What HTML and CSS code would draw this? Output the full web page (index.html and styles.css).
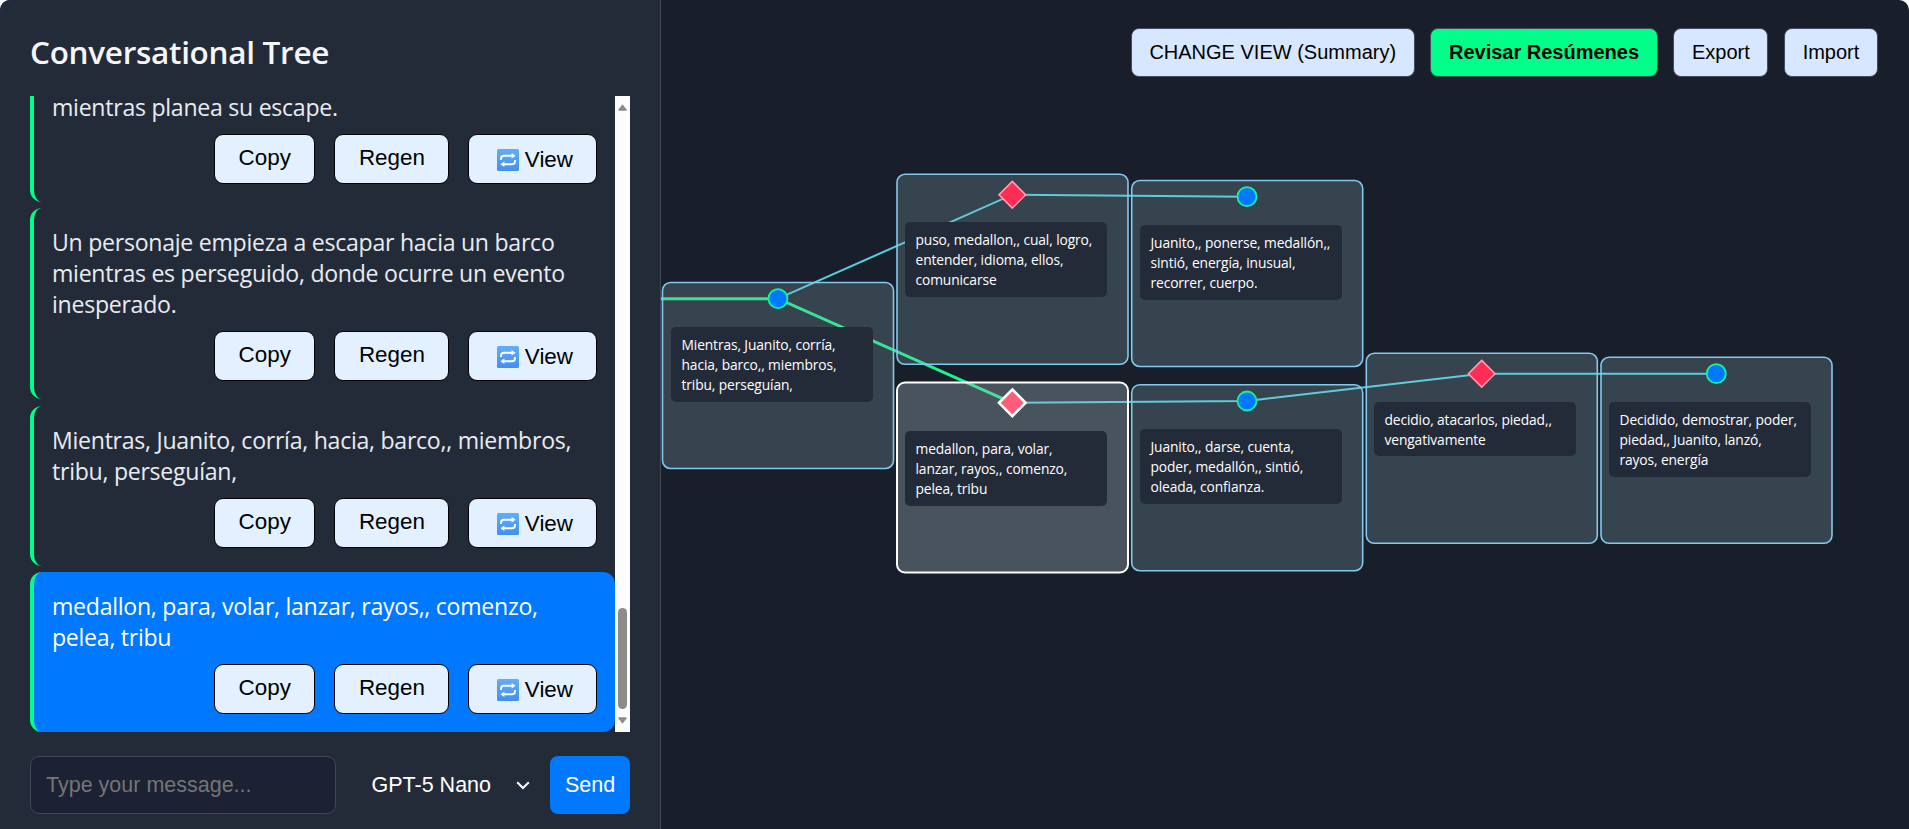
FILE: index.html
```html
<!DOCTYPE html>
<html lang="es">
<head>
<meta charset="utf-8">
<title>Conversational Tree</title>
<link rel="stylesheet" href="styles.css">
</head>
<body>
<svg class="defs" width="0" height="0" aria-hidden="true">
  <defs>
    <linearGradient id="tile" x1="0" y1="0" x2="0" y2="1"><stop offset="0" stop-color="#63adf7"/><stop offset="1" stop-color="#4090f2"/></linearGradient>
    <symbol id="repeat" viewBox="0 0 22 22">
      <rect width="22" height="22" rx="1.5" fill="url(#tile)"/>
      <path d="M4 11V9.7Q4 6.7 7 6.7H15M18 11V12.3Q18 15.3 15 15.3H7" fill="none" stroke="#fff" stroke-width="1.9"/>
      <path d="M14.6 4L18.6 6.7L14.6 9.4ZM7.4 12.6L3.4 15.3L7.4 18Z" fill="#fff"/>
    </symbol>
  </defs>
</svg>
<div class="app">
  <aside class="sidebar">
    <h1 class="title">Conversational Tree</h1>
    <div class="history">
      <div class="messages">
        <article class="message">
          <p class="text">mientras planea su escape.</p>
          <div class="actions"><button class="action">Copy</button><button class="action">Regen</button><button class="action view"><svg class="icon"><use href="#repeat"/></svg>View</button></div>
        </article>
        <article class="message">
          <p class="text">Un personaje empieza a escapar hacia un barco<br>mientras es perseguido, donde ocurre un evento<br>inesperado.</p>
          <div class="actions"><button class="action">Copy</button><button class="action">Regen</button><button class="action view"><svg class="icon"><use href="#repeat"/></svg>View</button></div>
        </article>
        <article class="message">
          <p class="text">Mientras, Juanito, corría, hacia, barco,, miembros,<br>tribu, perseguían,</p>
          <div class="actions"><button class="action">Copy</button><button class="action">Regen</button><button class="action view"><svg class="icon"><use href="#repeat"/></svg>View</button></div>
        </article>
        <article class="message active">
          <p class="text">medallon, para, volar, lanzar, rayos,, comenzo,<br>pelea, tribu</p>
          <div class="actions"><button class="action">Copy</button><button class="action">Regen</button><button class="action view"><svg class="icon"><use href="#repeat"/></svg>View</button></div>
        </article>
      </div>
      <div class="scrollbar">
        <svg class="arrow" viewBox="0 0 9 7"><path d="M4.5 .3L8.6 5.6Q8.8 6.8 8 6.8H1Q.2 6.8 .4 5.6Z"/></svg>
        <div class="thumb"></div>
        <svg class="arrow" viewBox="0 0 9 7"><path d="M4.5 6.8L8.6 1.5Q8.8 .3 8 .3H1Q.2 .3 .4 1.5Z"/></svg>
      </div>
    </div>
    <form class="composer">
      <input class="prompt" type="text" placeholder="Type your message...">
      <div class="model"><span>GPT-5 Nano</span><svg class="chevron" viewBox="0 0 14 9"><path d="M1.2 1.2L7 7L12.8 1.2"/></svg></div>
      <button class="send" type="button">Send</button>
    </form>
  </aside>
  <main class="canvas">
    <nav class="toolbar">
      <button class="tool">CHANGE VIEW (Summary)</button>
      <button class="tool primary">Revisar Resúmenes</button>
      <button class="tool">Export</button>
      <button class="tool">Import</button>
    </nav>
    <svg class="tree" viewBox="661 0 1248 829">
      <g class="links">
        <path class="link path" d="M640 298.7H778L1012.3 402.8"/>
        <path class="link" d="M778 298.7L1012.3 194.7L1247 196.7"/>
        <path class="link" d="M1012.3 402.8L1247 401L1481.7 373.7H1716.3"/>
      </g>
      <g class="cards">
        <rect x="662.5" y="282.5" width="231" height="186" rx="8"/>
        <rect x="897" y="174.3" width="231" height="190" rx="8"/>
        <rect class="selected" x="897" y="382.5" width="231" height="190" rx="8"/>
        <rect x="1131.7" y="180.5" width="231" height="186" rx="8"/>
        <rect x="1131.7" y="384.7" width="231" height="186" rx="8"/>
        <rect x="1366.3" y="353.3" width="231" height="190" rx="8"/>
        <rect x="1601" y="357.3" width="231" height="186" rx="8"/>
      </g>
      <g class="marks">
        <circle cx="778" cy="298.7" r="9.5"/>
        <circle cx="1247" cy="196.7" r="9.5"/>
        <circle cx="1247" cy="401" r="9.5"/>
        <circle cx="1716.3" cy="373.7" r="9.5"/>
        <path d="M1012.3 181.4L1025.6 194.7L1012.3 208L999 194.7Z"/>
        <path d="M1481.7 360.4L1495 373.7L1481.7 387L1468.4 373.7Z"/>
        <path class="selected" d="M1012.3 389.5L1025.6 402.8L1012.3 416.1L999 402.8Z"/>
      </g>
    </svg>
    <div class="note" style="left:10px;top:327px">Mientras, Juanito, corría,<br>hacia, barco,, miembros,<br>tribu, perseguían,</div>
    <div class="note" style="left:244px;top:222px">puso, medallon,, cual, logro,<br>entender, idioma, ellos,<br>comunicarse</div>
    <div class="note" style="left:244px;top:431px">medallon, para, volar,<br>lanzar, rayos,, comenzo,<br>pelea, tribu</div>
    <div class="note" style="left:479px;top:225px">Juanito,, ponerse, medallón,,<br>sintió, energía, inusual,<br>recorrer, cuerpo.</div>
    <div class="note" style="left:479px;top:429px">Juanito,, darse, cuenta,<br>poder, medallón,, sintió,<br>oleada, confianza.</div>
    <div class="note" style="left:713px;top:402px">decidio, atacarlos, piedad,,<br>vengativamente</div>
    <div class="note" style="left:948px;top:402px">Decidido, demostrar, poder,<br>piedad,, Juanito, lanzó,<br>rayos, energía</div>
  </main>
</div>
</body>
</html>
```

FILE: styles.css
```css
* { box-sizing: border-box; }
body { margin: 0; background: #fff; font-family: "Open Sans", "Noto Sans", sans-serif; }
.defs { position: absolute; }
button, input { font-family: "Liberation Sans", Arial, sans-serif; }
.app { display: flex; width: 1909px; height: 829px; overflow: hidden; border-radius: 10px 10px 0 0; background: #191f2a; }

.sidebar { display: flex; flex-direction: column; flex: none; width: 661px; padding: 0 30px 15px; border-right: 1px solid #414755; background: #242b38; }
.title { margin: 0; height: 96px; padding-top: 30px; font-size: 31.5px; line-height: 44px; font-weight: 600; letter-spacing: -0.3px; color: #f4f6fb; white-space: nowrap; }
.history { display: flex; width: 600px; height: 636px; overflow: hidden; }
.messages { display: flex; flex-direction: column; justify-content: flex-end; gap: 6.5px; width: 585px; }
.message { flex: none; padding: 18px; border-left: 4px solid #00ff88; border-radius: 12px; color: #e8ebf2; }
.message.active { background: #0078ff; color: #fff; }
.text { margin: 0 0 11px; padding-top: 1px; font-size: 23.1px; line-height: 31px; letter-spacing: -0.27px; white-space: nowrap; }
.actions { display: flex; justify-content: flex-end; gap: 19px; }
.action { display: flex; align-items: center; height: 50px; padding: 0 23.5px 2px; border: 1px solid #000; border-radius: 9px; background: #e2f0ff; font-size: 22.4px; color: #000; }
.view { padding: 2px 23px 0 28px; }
.icon { width: 22px; height: 22px; margin-right: 5.5px; }
.scrollbar { display: flex; flex-direction: column; align-items: center; width: 15px; padding: 8px 0; background: #fcfcfc; }
.arrow { flex: none; width: 9px; height: 7px; fill: #8b8b8b; }
.thumb { width: 9px; height: 101px; margin-top: auto; margin-bottom: 8px; border-radius: 5px; background: #8b8b8b; }

.composer { display: flex; margin-top: 24px; height: 58px; }
.prompt { width: 306px; padding: 0 15px; border: 1px solid #414759; border-radius: 9px; background: #1c2133; font-size: 21.5px; }
.prompt::placeholder { color: #757575; }
.model { display: flex; align-items: center; justify-content: space-between; width: 158px; margin-left: 35.5px; font: 21.5px "Liberation Sans", Arial, sans-serif; color: #fff; }
.chevron { width: 14px; height: 9px; fill: none; stroke: #fff; stroke-width: 2; }
.send { width: 80px; margin-left: auto; padding: 0; border: 0; border-radius: 8px; background: #0078ff; font-size: 21.5px; color: #fff; }

.canvas { position: relative; flex: 1; overflow: hidden; }
.toolbar { display: flex; justify-content: flex-end; gap: 15.5px; padding: 28px 31px 0 0; }
.tool { height: 49px; padding: 0 17.7px; border: 1px solid #414d5f; border-radius: 8px; background: #d7e7ff; font-size: 20px; color: #000; white-space: nowrap; }
.tool.primary { background: #00ff88; font-weight: 700; }
.tree { position: absolute; inset: 0; width: 1248px; height: 829px; }
.link { fill: none; stroke: #52d3e2; stroke-width: 2; }
.link.path { stroke: #1cf58a; stroke-width: 3; }
.cards rect { fill: rgba(145, 179, 190, .25); stroke: #84c9ec; stroke-width: 1.6; }
.cards .selected { fill: rgba(160, 180, 193, .35); stroke: #fff; stroke-width: 2; }
.marks circle { fill: #0078ff; stroke: #14f29a; stroke-width: 1.8; }
.marks path { fill: #ff2d55; stroke: #ff9fb3; stroke-width: 1.6; }
.marks .selected { fill: #ff5c7a; stroke: #fff; stroke-width: 2.6; }
.note { position: absolute; width: 202px; padding: 8px 0 6px 10.5px; border-radius: 5px; background: #242b38; font-size: 13.8px; line-height: 20.2px; letter-spacing: -0.12px; color: #fff; white-space: nowrap; }
```
